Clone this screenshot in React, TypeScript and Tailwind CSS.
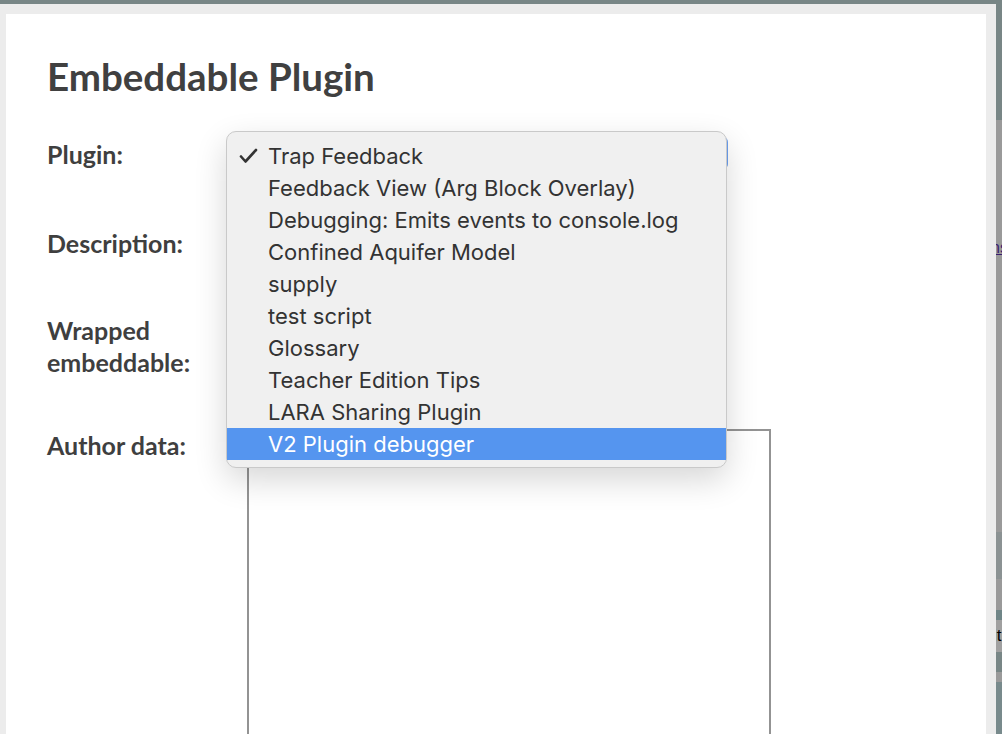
const OPTIONS = [
  "Trap Feedback",
  "Feedback View (Arg Block Overlay)",
  "Debugging: Emits events to console.log",
  "Confined Aquifer Model",
  "supply",
  "test script",
  "Glossary",
  "Teacher Edition Tips",
  "LARA Sharing Plugin",
  "V2 Plugin debugger",
];

const CHECKED = "Trap Feedback";
const HOVERED = "V2 Plugin debugger";

// Native macOS-style select popup, drawn open over the form.
function SelectMenu() {
  return (
    <div className="absolute left-[220px] top-[117px] z-10 w-[501px] rounded-[10px] border border-[#c9c9c9] bg-[#f0f0f0] pt-[8px] pb-[7px] shadow-[0_12px_32px_rgba(0,0,0,0.16)] font-['Inter',sans-serif] text-[22px]">
      {OPTIONS.map((opt) => {
        const hovered = opt === HOVERED;
        return (
          <div
            key={opt}
            className={`flex h-[32px] items-center ${hovered ? "bg-[#5595ef] text-white" : "text-[#333]"}`}
          >
            <span className="flex w-[41px] justify-end pr-[10px]">
              {opt === CHECKED && (
                <svg className="h-[16px] w-[19px]" viewBox="0 0 19 16" fill="none" stroke="#333" strokeWidth={2.6} strokeLinecap="round" strokeLinejoin="round">
                  <path d="M2 8.5l4.5 5L17 2" />
                </svg>
              )}
            </span>
            <span className="whitespace-nowrap">{opt}</span>
          </div>
        );
      })}
    </div>
  );
}

function Label({ children }: { children: React.ReactNode }) {
  return <div className="w-[200px] shrink-0 text-[25px] font-bold leading-[32px] text-[#3f3f3f]">{children}</div>;
}

export default function App() {
  return (
    <div className="flex h-[734px] w-full flex-col overflow-hidden bg-[#ececec] font-['Lato',sans-serif]">
      <div className="h-[4px] shrink-0 bg-[#788686]" />
      <div className="flex min-h-0 flex-1">
        <div className="flex min-w-0 flex-1 pl-[6px] pr-[10px] pt-[10px]">
          <section className="relative flex-1 bg-white pl-[41px] pt-[41px]">
            <h1 className="text-[38.5px] font-bold leading-[43px] text-[#404040]">Embeddable Plugin</h1>

            <div className="mt-[40px] flex h-[89px]">
              <Label>Plugin:</Label>
              <div className="-mt-[1px] h-[32px] w-[481px] rounded-[5px] border-[3px] border-[#6b9ff0]" />
            </div>
            <div className="flex h-[87px]">
              <Label>Description:</Label>
            </div>
            <div className="flex h-[115px]">
              <Label>
                Wrapped
                <br />
                embeddable:
              </Label>
            </div>
            <div className="flex">
              <Label>Author data:</Label>
              <div className="h-[360px] w-[524px] border-2 border-[#939393] bg-white" />
            </div>

            <SelectMenu />
          </section>
        </div>

        {/* sliver of the page behind the modal */}
        <div className="-mt-[4px] flex w-[6px] shrink-0 flex-col overflow-hidden font-['Liberation_Sans',sans-serif]">
          <div className="h-[120px] bg-[#788686]" />
          <div className="flex h-[412px] flex-col bg-[#9a9a9a] pt-[118px]">
            <span className="-ml-[5px] text-[16px] leading-[20px] text-[#3a1d6e] underline">ns</span>
          </div>
          <div className="h-[47px] bg-[#8b9293]" />
          <div className="h-[31px] bg-[#9a9a9a]" />
          <div className="h-[10px] bg-[#6f8587]" />
          <div className="flex h-[32px] items-center bg-[#a0a0a0]">
            <span className="-ml-[3px] text-[17px] text-black">it</span>
          </div>
          <div className="h-[20px] bg-[#788686]" />
          <div className="h-[10px] bg-[#9a9a9a]" />
          <div className="flex-1 bg-[#788a8c]" />
        </div>
      </div>
    </div>
  );
}
